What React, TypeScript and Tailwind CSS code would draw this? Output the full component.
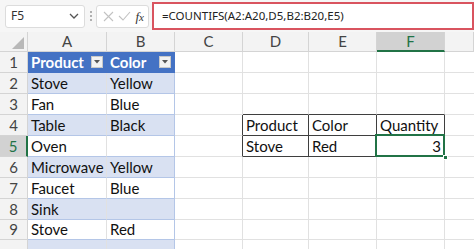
import React from "react";

const cols = [28, 79, 68, 68, 66, 68, 68, 29];
const GRID = "#e1e1e1";
const DARK = "#3f3f3f";

const rowsData: string[][] = [
  ["Product", "Color", "", "", "", ""],
  ["Stove", "Yellow", "", "", "", ""],
  ["Fan", "Blue", "", "", "", ""],
  ["Table", "Black", "", "Product", "Color", "Quantity"],
  ["Oven", "", "", "Stove", "Red", "3"],
  ["Microwave", "Yellow", "", "", "", ""],
  ["Faucet", "Blue", "", "", "", ""],
  ["Sink", "", "", "", "", ""],
  ["Stove", "Red", "", "", "", ""],
  ["", "", "", "", "", ""],
];
const heights = [21, 21, 21, 21, 21, 21, 21, 21, 20, 21];

function DropBtn() {
  return (
    <span className="w-[12px] h-[12px] bg-[#f2f2f2] border border-[#c8c8c8] flex items-center justify-center">
      <svg width="6" height="4" viewBox="0 0 6 4">
        <path d="M0 0 L6 0 L3 3.5 Z" fill="#555" />
      </svg>
    </span>
  );
}

export default function App() {
  const font = { fontFamily: "Lato, 'Open Sans', sans-serif" };
  return (
    <div className="w-[474px] h-[249px] overflow-hidden bg-white relative" style={font}>
      {/* toolbar */}
      <div className="h-[32px] bg-[#f6f6f6] flex items-center">
        <div className="ml-[5px] w-[80px] h-[23px] bg-white border border-[#dcdcdc] rounded-[3px] flex items-center justify-between px-[5px]">
          <span className="text-[12px] text-[#333]" style={{ fontFamily: "'Noto Sans', sans-serif" }}>F5</span>
          <svg width="10" height="6" viewBox="0 0 10 6">
            <path d="M1 1 L5 5 L9 1" stroke="#555" strokeWidth="1.3" fill="none" />
          </svg>
        </div>
        <div className="ml-[2px] w-[8px] flex flex-col items-center gap-[2px]">
          <span className="w-[2px] h-[2px] bg-[#999] rounded-full" />
          <span className="w-[2px] h-[2px] bg-[#999] rounded-full" />
          <span className="w-[2px] h-[2px] bg-[#999] rounded-full" />
        </div>
        <div className="ml-[1px] w-[53px] h-[23px] bg-white border border-[#dcdcdc] rounded-[3px] flex items-center justify-between pl-[6px] pr-[4px]">
          <svg width="11" height="11" viewBox="0 0 11 11">
            <path d="M1 1 L10 10 M10 1 L1 10" stroke="#c2c2c2" strokeWidth="1.1" />
          </svg>
          <svg width="13" height="10" viewBox="0 0 13 10">
            <path d="M1 5 L5 9 L12 1" stroke="#c2c2c2" strokeWidth="1.1" fill="none" />
          </svg>
          <span className="text-[13px] italic text-[#333] leading-none" style={{ fontFamily: "'Liberation Serif', serif" }}>
            f<span className="text-[11px]">x</span>
          </span>
        </div>
        <div className="ml-[3px] flex-1 h-[28px] bg-white border-2 border-[#d9545f] flex items-center pl-[8px]">
          <span className="text-[11.5px] text-[#222]" style={{ fontFamily: "'Noto Sans', sans-serif" }}>
            =COUNTIFS(A2:A20,D5,B2:B20,E5)
          </span>
        </div>
      </div>

      {/* column header row */}
      <div className="flex h-[20px] bg-[#f3f3f3]">
        <div className="w-[28px] h-full border-r border-b border-[#d4d4d4] relative flex items-end justify-end pr-[3px] pb-[2px]">
          <svg width="12" height="12" viewBox="0 0 12 12">
            <path d="M12 0 L12 12 L0 12 Z" fill="#b8b8b8" />
          </svg>
        </div>
        {["A", "B", "C", "D", "E", "F", ""].map((c, i) => {
          const sel = c === "F";
          return (
            <div
              key={i}
              className={
                "h-full flex items-center justify-center text-[15px] text-[#444] border-r border-[#d4d4d4] " +
                (sel ? "bg-[#d2d2d2] border-b-2 border-b-[#217346] text-[#217346]" : "border-b border-b-[#d4d4d4]")
              }
              style={{ width: cols[i + 1] }}
            >
              {c}
            </div>
          );
        })}
      </div>

      {/* rows */}
      {rowsData.map((r, ri) => {
        const rowNum = ri + 1;
        const selRow = rowNum === 5;
        const inTable = rowNum >= 2;
        const banded = inTable && rowNum % 2 === 0;
        return (
          <div key={ri} className="flex" style={{ height: heights[ri] }}>
            <div
              className={
                "w-[28px] h-full flex items-center justify-center text-[15px] border-b " +
                (selRow
                  ? "bg-[#d2d2d2] text-[#217346] border-r-2 border-r-[#217346] border-b-[#d4d4d4]"
                  : "bg-[#f3f3f3] text-[#444] border-r border-[#d4d4d4]")
              }
            >
              {rowNum <= 9 ? rowNum : ""}
            </div>
            {r.map((t, ci) => {
              const colIdx = ci;
              const cls = "h-full flex items-center text-[15px] text-[#111] px-[3px] border-r border-b ";
              let bg = "bg-white";
              let rCol = GRID;
              let bCol = GRID;
              if (colIdx <= 1) {
                if (rowNum === 1) {
                  bg = "bg-[#4472c4]";
                  rCol = "#4472c4";
                  bCol = "#4472c4";
                } else {
                  bg = banded ? "bg-[#d9e1f2]" : "bg-white";
                  bCol = "#b4c6e7";
                  rCol = colIdx === 1 ? "#b4c6e7" : GRID;
                }
              }
              if (rowNum >= 4 && rowNum <= 5 && colIdx >= 3 && colIdx <= 5) {
                rCol = DARK;
                bCol = DARK;
              }
              if (rowNum >= 4 && rowNum <= 5 && colIdx === 2) rCol = DARK;
              if (rowNum === 3 && colIdx >= 3 && colIdx <= 5) bCol = DARK;
              const isHeader = rowNum === 1 && colIdx <= 1;
              const isSel = rowNum === 5 && colIdx === 5;
              return (
                <div
                  key={ci}
                  className={cls + bg + (isHeader ? " justify-between text-white font-bold" : "") + (t === "3" ? " justify-end" : "") + (isSel ? " relative" : "")}
                  style={{ width: cols[ci + 1], borderRightColor: rCol, borderBottomColor: bCol }}
                >
                  <span>{t}</span>
                  {isHeader && <DropBtn />}
                  {isSel && (
                    <>
                      <div className="absolute left-[-2px] top-[-2px] right-[-1px] bottom-[-1px] border-2 border-[#217346]" />
                      <div className="absolute right-[-4px] bottom-[-4px] w-[5px] h-[5px] bg-[#217346] border border-white" />
                    </>
                  )}
                </div>
              );
            })}
            <div className="h-full border-b" style={{ width: cols[7], borderBottomColor: GRID }} />
          </div>
        );
      })}
    </div>
  );
}
